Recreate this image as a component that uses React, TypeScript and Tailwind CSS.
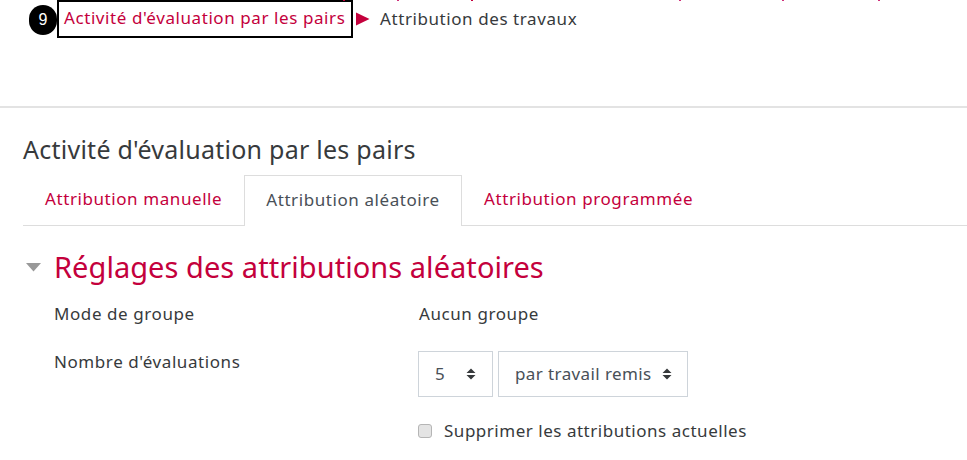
import React from "react";

function Updown() {
  return (
    <svg width="10" height="12" viewBox="0 0 10 12" className="shrink-0">
      <path d="M0.5 5 L5 0.5 L9.5 5 Z M0.5 7 L5 11.5 L9.5 7 Z" fill="#373a3c" />
    </svg>
  );
}

export default function App() {
  return (
    <div className="relative w-[967px] h-[460px] overflow-hidden bg-white text-[#373a3c] font-['Noto_Sans',sans-serif] text-[17px] tracking-[0.58px]">
      <span className="absolute top-0 left-[343px] w-[2px] h-[1px] bg-[#c4003c]" />
      <span className="absolute top-0 left-[397px] w-[2px] h-[1px] bg-[#d0307a]" />
      <span className="absolute top-0 left-[471px] w-[2px] h-[1px] bg-[#c4003c]" />
      <span className="absolute top-0 left-[679px] w-[2px] h-[1px] bg-[#d0307a]" />
      <span className="absolute top-0 left-[782px] w-[2px] h-[1px] bg-[#d0307a]" />
      <span className="absolute top-0 left-[878px] w-[2px] h-[1px] bg-[#d0307a]" />
      <div className="h-[108px] border-b-2 border-[#e3e3e3] pl-[29px]">
        <div className="flex items-center h-[38px]">
          <div className="w-[28px] h-[30px] rounded-full bg-black text-white flex items-center justify-center text-[16px] tracking-normal font-['Liberation_Sans',sans-serif] mt-[2px]">9</div>
          <div className="border-2 border-black h-[38px] w-[296px] pl-[5px] pb-[2px] flex items-center text-[#c4003c] whitespace-nowrap">Activité d'évaluation par les pairs</div>
          <svg width="14" height="14" viewBox="0 0 14 14" className="ml-[3px]"><path d="M0 0.5 L13.5 7 L0 13.5 Z" fill="#c4003c" /></svg>
          <span className="ml-[10px] pb-[1px] whitespace-nowrap">Attribution des travaux</span>
        </div>
      </div>
      <div className="pl-[23px] pt-[26px]">
        <div className="text-[25px] tracking-[0.25px] leading-[30px] whitespace-nowrap">Activité d'évaluation par les pairs</div>
        <div className="flex mt-[11px] h-[51px] items-end border-b border-[#dddddd]">
          <div className="w-[221px] pl-[22px] pb-[2px] h-[50px] flex items-center text-[#c4003c] whitespace-nowrap">Attribution manuelle</div>
          <div className="w-[218px] h-[51px] pb-[2px] -mb-px bg-white border border-b-0 border-[#dddddd] flex items-center justify-center whitespace-nowrap text-[#495057]">Attribution aléatoire</div>
          <div className="pl-[22px] pb-[2px] h-[50px] flex items-center text-[#c4003c] whitespace-nowrap">Attribution programmée</div>
        </div>
        <div className="flex items-center mt-[23px] h-[36px]">
          <svg width="15" height="9" viewBox="0 0 15 9" className="ml-[3px]"><path d="M0 0 H15 L7.5 8.5 Z" fill="#999999" /></svg>
          <span className="ml-[13px] text-[29px] tracking-[0.05px] text-[#c4003c] whitespace-nowrap">Réglages des attributions aléatoires</span>
        </div>
        <div className="pl-[30px] mt-[17px]">
          <div className="flex h-[24px] items-center">
            <div className="w-[365px] pl-[1px]">Mode de groupe</div>
            <div className="ml-[1px]">Aucun groupe</div>
          </div>
          <div className="flex mt-[25px]">
            <div className="w-[365px] pl-[1px] leading-[24px] whitespace-nowrap mt-[-1px]">Nombre d'évaluations</div>
            <div>
              <div className="flex gap-[5px]">
                <div className="w-[75px] h-[46px] border border-[#ced4da] flex items-center justify-between pl-[16px] pr-[16px] text-[#495057]"><span>5</span><Updown /></div>
                <div className="w-[190px] h-[46px] border border-[#ced4da] flex items-center justify-between pl-[16px] pr-[15px] text-[#495057] tracking-[0.4px]"><span className="whitespace-nowrap">par travail remis</span><Updown /></div>
              </div>
              <div className="flex items-center mt-[22px] h-[24px]">
                <input type="checkbox" className="appearance-none w-[14px] h-[14px] rounded-[3px] bg-[#e4e4e4] border border-[#b5b5b5]" />
                <span className="ml-[12px] whitespace-nowrap tracking-[0.52px]">Supprimer les attributions actuelles</span>
              </div>
            </div>
          </div>
        </div>
      </div>
    </div>
  );
}
